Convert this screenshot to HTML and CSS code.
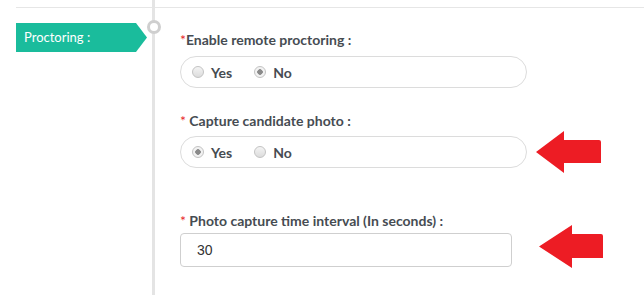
FILE: index.html
```html
<!DOCTYPE html>
<html lang="en">
<head>
<meta charset="utf-8">
<title>Proctoring</title>
<link rel="stylesheet" href="styles.css">
</head>
<body>
<div class="page">
  <aside class="aside">
    <div class="aside-inner">
      <div class="tag">Proctoring :</div>
    </div>
  </aside>
  <div class="rail"><span class="node"></span></div>
  <main class="main">
    <div class="main-inner">
      <div class="field f1">
        <label class="label"><span class="req">*</span>Enable remote proctoring :</label>
        <div class="row">
          <div class="pill">
            <label class="opt"><input type="radio" name="remote" class="radio"><span>Yes</span></label>
            <label class="opt"><input type="radio" name="remote" class="radio" checked><span>No</span></label>
          </div>
        </div>
      </div>
      <div class="field f2">
        <label class="label"><span class="req">*</span> Capture candidate photo :</label>
        <div class="row">
          <div class="pill">
            <label class="opt"><input type="radio" name="photo" class="radio" checked><span>Yes</span></label>
            <label class="opt"><input type="radio" name="photo" class="radio"><span>No</span></label>
          </div>
          <svg class="arrow a1" width="65" height="42" viewBox="0 0 65 42"><path d="M0 21 L28 0 L28 9 L63 9 Q65 9 65 11 L65 32 L28 32 L28 42 Z" fill="#ed1c24"/></svg>
        </div>
      </div>
      <div class="field f3">
        <label class="label"><span class="req">*</span> Photo capture time interval (In seconds) :</label>
        <div class="row">
          <input class="text" type="text" value="30">
          <svg class="arrow a2" width="64" height="43" viewBox="0 0 64 43"><path d="M0 21.5 L33 0 L33 9 L62 9 Q64 9 64 11 L64 33 L33 33 L33 43 Z" fill="#ed1c24"/></svg>
        </div>
      </div>
    </div>
  </main>
</div>
</body>
</html>
```
FILE: styles.css
```css
* { box-sizing: border-box; }
html, body { margin: 0; padding: 0; background: #fff; }
body { font-family: Lato, "Open Sans", sans-serif; color: #3d4349; }
.page { display: flex; height: 295px; overflow: hidden; }
.aside { width: 152px; padding: 7px 0 0 16px; }
.aside-inner { border-top: 1px solid #e6e6e6; padding-top: 15px; }
.tag {
  width: 131px; height: 29px; line-height: 29px;
  padding-left: 8px;
  background: #1abc9c; color: #fff;
  font-size: 13px;
  clip-path: polygon(0 0, 120px 0, 131px 50%, 120px 100%, 0 100%);
}
.rail { width: 3px; background: #e4e4e4; position: relative; flex: none; }
.node {
  position: absolute; top: 20px; left: -5.5px;
  width: 14px; height: 14px; border-radius: 50%;
  border: 3px solid #cfcfcf; background: #fff;
}
.main { flex: 1; padding-top: 7px; }
.main-inner { border-top: 1px solid #e6e6e6; padding: 22px 0 0 25px; height: 100%; }
.label { display: block; font-size: 14px; font-weight: 700; line-height: 20px; color: #464c52; }
.req { color: #e8262c; font-weight: 400; }
.row { display: flex; align-items: center; }
.f1 .label { margin-bottom: 6px; }
.f2 { margin-top: 23px; }
.f2 .label { margin-bottom: 5px; }
.f3 { margin-top: 43px; }
.f3 .label { margin-bottom: 2px; }
.pill {
  width: 347px; height: 32px;
  border: 1px solid #dcdcdc; border-radius: 16px;
  display: flex; align-items: center; gap: 22px;
  padding-left: 11px;
}
.opt { display: flex; align-items: center; gap: 7px; font-size: 14px; font-weight: 700; color: #464c52; }
.radio {
  appearance: none; -webkit-appearance: none; margin: 0;
  width: 12px; height: 12px; border-radius: 50%;
  border: 1px solid #c3c3c3;
  background: linear-gradient(#f4f4f4, #dcdcdc);
}
.radio:checked {
  background: radial-gradient(circle, #8a8a8a 0 2.5px, #f2f2f2 3px);
}
.text {
  width: 332px; height: 34px;
  border: 1px solid #cfcfcf; border-radius: 4px;
  padding: 0 0 0 16px;
  font-family: "Liberation Sans", Arial, sans-serif; font-size: 14px; color: #333;
}
.arrow { display: block; flex: none; }
.a1 { margin: -5px 0 -5px 9px; }
.a2 { margin: -8px 0 -1px 27px; }
```
